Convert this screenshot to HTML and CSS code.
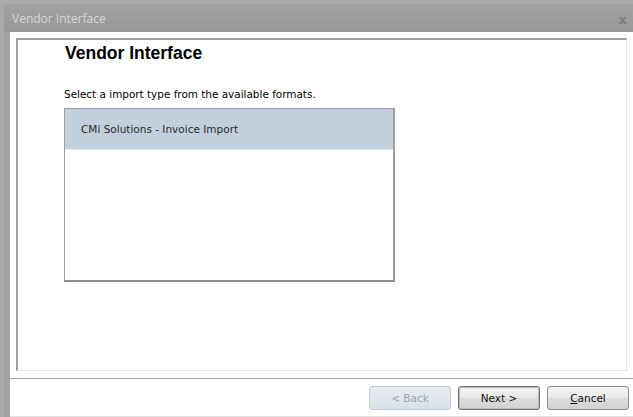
FILE: index.html
```html
<!DOCTYPE html>
<html lang="en">
<head>
<meta charset="utf-8">
<title>Vendor Interface</title>
<link rel="stylesheet" href="styles.css">
</head>
<body>
<div class="window">
  <div class="titlebar">
    <span class="title">Vendor Interface</span>
    <span class="close">x</span>
  </div>
  <div class="frame">
    <div class="client">
      <div class="panel">
        <h1 class="heading">Vendor Interface</h1>
        <p class="hint">Select a import type from the available formats.</p>
        <div class="listbox">
          <div class="item selected">CMi Solutions - Invoice Import</div>
        </div>
      </div>
      <div class="footer">
        <button class="btn" disabled>&lt; Back</button>
        <button class="btn default">Next &gt;</button>
        <button class="btn"><u>C</u>ancel</button>
      </div>
    </div>
  </div>
</div>
</body>
</html>
```

FILE: styles.css
```css
html, body {
  margin: 0;
  padding: 0;
}

body {
  width: 633px;
  height: 417px;
  overflow: hidden;
  background: #ababab;
  font-family: "DejaVu Sans", Tahoma, sans-serif;
}

.window {
  margin: 4px 0 0 4px;
  height: 413px;
  display: flex;
  flex-direction: column;
}

.titlebar {
  height: 28px;
  flex: none;
  display: flex;
  align-items: center;
  justify-content: space-between;
  padding: 0 6px 0 8px;
  background: linear-gradient(#a2a2a2, #979797);
}

.title {
  font-family: "Open Sans", "DejaVu Sans", sans-serif;
  font-size: 12px;
  color: #d6d6d6;
}

.close {
  font-family: "DejaVu Sans", sans-serif;
  font-weight: bold;
  font-size: 13px;
  color: #7c7c7c;
  margin-top: 2px;
}

.frame {
  flex: 1;
  display: flex;
  background: #a3a3a3;
  padding-left: 6px;
}

.client {
  flex: 1;
  background: #fff;
  display: flex;
  flex-direction: column;
  border-bottom: 1px solid #e2e2e2;
}

.panel {
  margin: 6px 6px 0 6px;
  height: 333px;
  box-sizing: border-box;
  border-top: 2px solid #a0a0a0;
  border-left: 2px solid #a0a0a0;
  border-right: 1px solid #e3e3e3;
  border-bottom: 1px solid #e3e3e3;
  padding: 0 0 0 46px;
}

.heading {
  margin: 3px 0 0 1px;
  font-family: "Liberation Sans", Arial, sans-serif;
  font-weight: bold;
  font-size: 17.5px;
  line-height: 20px;
  color: #000;
}

.hint {
  margin: 24px 0 0 0;
  font-size: 10.45px;
  line-height: 14px;
  color: #000;
}

.listbox {
  margin-top: 7px;
  width: 331px;
  height: 174px;
  box-sizing: border-box;
  border: 1px solid #9c9c9c;
  border-right: 2px solid #9c9c9c;
  border-bottom: 2px solid #8f8f8f;
}

.item {
  height: 40px;
  display: flex;
  align-items: center;
  padding-left: 16px;
  font-size: 10.5px;
  color: #2a2a2a;
}

.item.selected {
  background: #c2cfdc;
  border-bottom: 1px solid #e6e6e6;
}

.footer {
  margin-top: 7px;
  border-top: 1px solid #a5a5a5;
  flex: 1;
  display: flex;
  justify-content: flex-end;
  align-items: flex-start;
  gap: 7px;
  padding: 7px 4px 0 0;
}

.btn {
  width: 82px;
  height: 24px;
  box-sizing: border-box;
  font-family: "DejaVu Sans", Tahoma, sans-serif;
  font-size: 10.5px;
  color: #111;
  border: 1px solid #8e8e8e;
  border-radius: 3px;
  background: linear-gradient(#f4f4f4 0%, #e8e8e8 50%, #dcdcdc 51%, #d2d2d2 100%);
  padding: 0;
}

.btn:disabled {
  color: #9aa3ad;
  border-color: #c3cbd3;
  background: linear-gradient(#e8edf2, #d9e0e7);
}

.btn.default {
  border-color: #6e6e6e;
  box-shadow: inset 0 0 0 1px #bcbcbc;
}
```
